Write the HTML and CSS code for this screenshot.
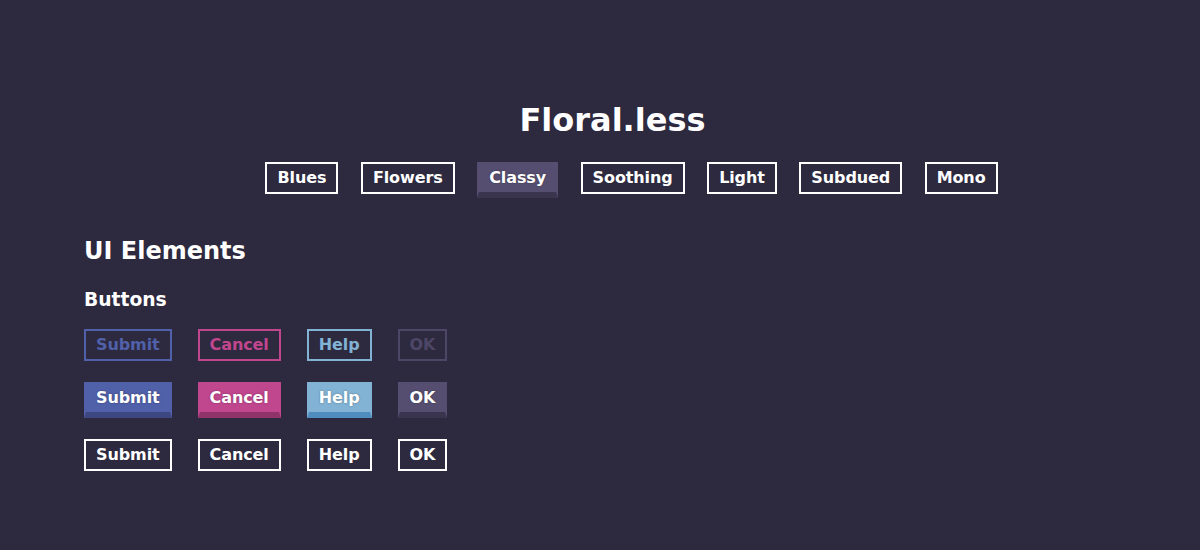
FILE: index.html
```html
<!DOCTYPE html>
<html lang="en">
<head>
<meta charset="utf-8">
<title>Floral.less</title>
<link rel="stylesheet" href="styles.css">
</head>
<body>
<header class="header">
  <h1 class="title">Floral.less</h1>
  <nav class="themes">
    <a class="btn btn-outline-white">Blues</a>
    <a class="btn btn-outline-white">Flowers</a>
    <a class="btn btn-fill btn-fill-purple">Classy</a>
    <a class="btn btn-outline-white">Soothing</a>
    <a class="btn btn-outline-white">Light</a>
    <a class="btn btn-outline-white">Subdued</a>
    <a class="btn btn-outline-white">Mono</a>
  </nav>
</header>
<main class="content">
  <h2 class="section-title">UI Elements</h2>
  <h3 class="sub-title">Buttons</h3>
  <div class="btn-row">
    <a class="btn btn-outline-blue">Submit</a>
    <a class="btn btn-outline-pink">Cancel</a>
    <a class="btn btn-outline-sky">Help</a>
    <a class="btn btn-outline-purple">OK</a>
  </div>
  <div class="btn-row">
    <a class="btn btn-fill btn-fill-blue">Submit</a>
    <a class="btn btn-fill btn-fill-pink">Cancel</a>
    <a class="btn btn-fill btn-fill-sky">Help</a>
    <a class="btn btn-fill btn-fill-purple">OK</a>
  </div>
  <div class="btn-row">
    <a class="btn btn-outline-white">Submit</a>
    <a class="btn btn-outline-white">Cancel</a>
    <a class="btn btn-outline-white">Help</a>
    <a class="btn btn-outline-white">OK</a>
  </div>
</main>
</body>
</html>
```
FILE: styles.css
```css
html, body {
  margin: 0;
  padding: 0;
}
body {
  background: #2d293e;
  color: #ffffff;
  font-family: "DejaVu Sans", "Liberation Sans", sans-serif;
  font-weight: bold;
  width: 1200px;
  height: 550px;
  overflow: hidden;
}

.header {
  padding-top: 100px;
}
.title {
  margin: 0;
  padding-left: 25px;
  font-size: 32px;
  line-height: 40px;
  text-align: center;
}
.themes {
  margin-top: 22px;
  padding-left: 63px;
  display: flex;
  justify-content: center;
  align-items: flex-start;
  gap: 22.5px;
  height: 36px;
}

.content {
  padding-left: 84px;
  padding-top: 38px;
}
.section-title {
  margin: 0;
  font-size: 24px;
  line-height: 30px;
}
.sub-title {
  margin: 22px 0 0;
  font-size: 18.72px;
  line-height: 24px;
}
.btn-row {
  display: flex;
  align-items: flex-start;
  gap: 26px;
  margin-top: 17px;
}
.btn-row + .btn-row {
  margin-top: 21px;
}

.btn {
  display: block;
  box-sizing: border-box;
  font-size: 16px;
  line-height: 18px;
  padding: 5px 10px;
  border: 2px solid #ffffff;
  color: #ffffff;
  white-space: nowrap;
  letter-spacing: -0.1px;
}
.btn-outline-white {
  border-color: #ffffff;
  color: #ffffff;
}
.btn-outline-blue {
  border-color: #5060a9;
  color: #5060a9;
}
.btn-outline-pink {
  border-color: #c0468e;
  color: #c0468e;
}
.btn-outline-sky {
  border-color: #82b2d4;
  color: #82b2d4;
}
.btn-outline-purple {
  border-color: #4d4666;
  color: #4d4666;
}

.btn-fill {
  border-bottom-width: 6px;
  text-shadow: 0 0 2px rgba(0, 0, 0, 0.35);
}
.btn-fill-blue {
  background: #5060a9;
  border-color: #5060a9;
  border-bottom-color: #3d4882;
}
.btn-fill-pink {
  background: #c0468e;
  border-color: #c0468e;
  border-bottom-color: #8f336a;
}
.btn-fill-sky {
  background: #82b2d4;
  border-color: #82b2d4;
  border-bottom-color: #4f8dbf;
}
.btn-fill-purple {
  background: #554e70;
  border-color: #554e70;
  border-bottom-color: #3a344f;
}
```
